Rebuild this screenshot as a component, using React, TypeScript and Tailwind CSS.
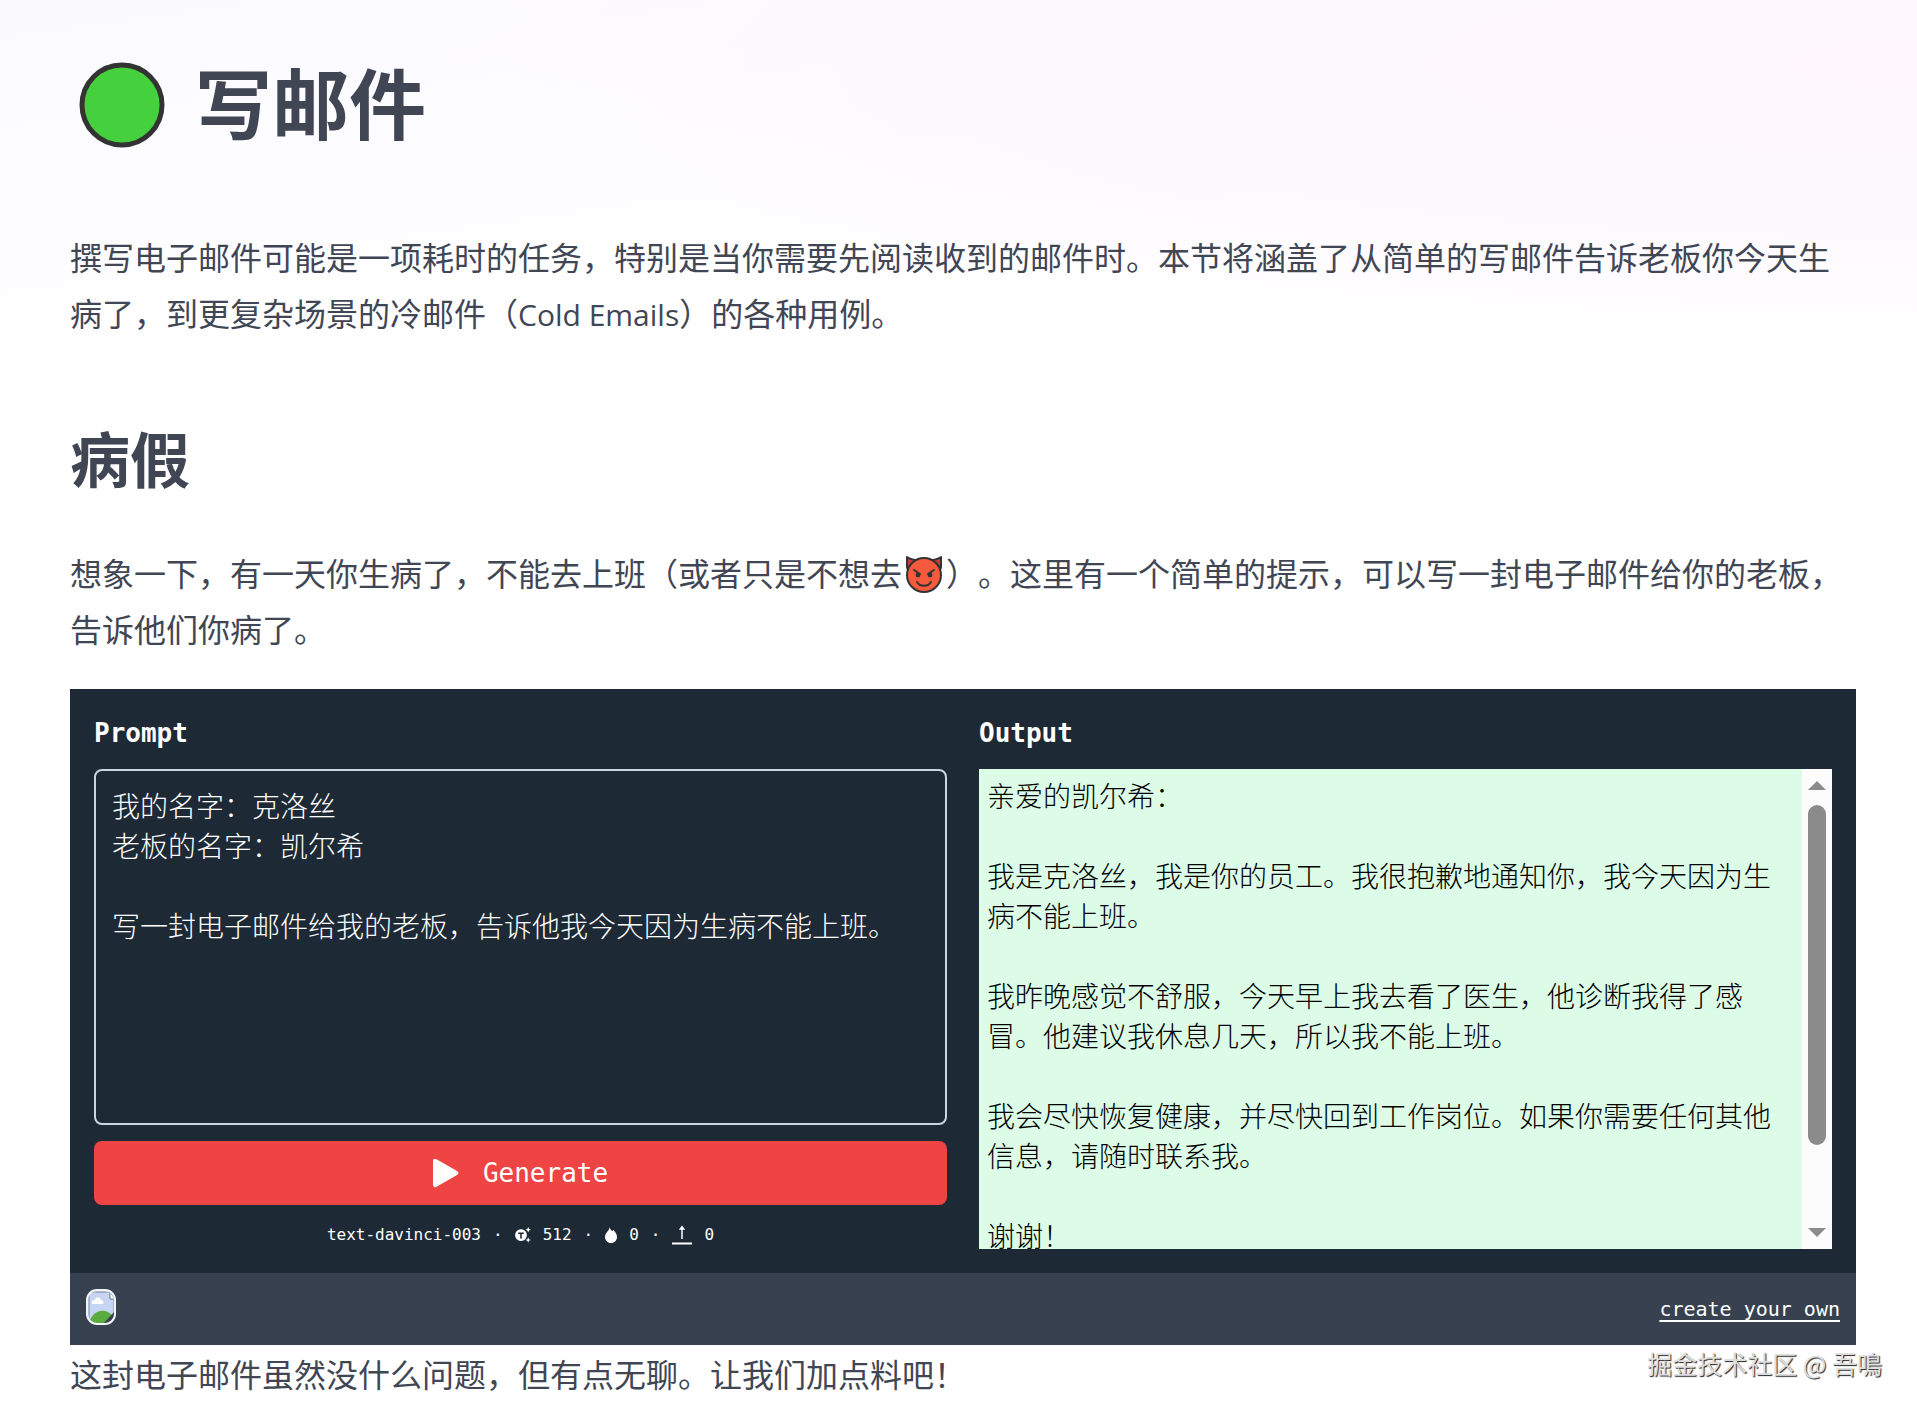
import { useState } from "react";

const PROMPT = `我的名字：克洛丝
老板的名字：凯尔希

写一封电子邮件给我的老板，告诉他我今天因为生病不能上班。`;

const OUTPUT = `亲爱的凯尔希：

我是克洛丝，我是你的员工。我很抱歉地通知你，我今天因为生病不能上班。

我昨晚感觉不舒服，今天早上我去看了医生，他诊断我得了感冒。他建议我休息几天，所以我不能上班。

我会尽快恢复健康，并尽快回到工作岗位。如果你需要任何其他信息，请随时联系我。

谢谢！`;

function GreenCircle() {
  return (
    <svg viewBox="0 0 86 86" className="size-[86px] shrink-0" aria-hidden="true">
      <circle cx="43" cy="43" r="40" fill="#45d03e" stroke="#333333" strokeWidth="5" />
    </svg>
  );
}

function DevilFace() {
  return (
    <svg viewBox="0 0 40 40" className="inline-block size-10 mx-0.5 mb-1.5 align-middle" aria-label="😈" role="img">
      <path d="M3 3v10c0 2 1 3 2 4L15 6C11 6 6 5 3 3ZM37 3v10c0 2-1 3-2 4L25 6c4 0 9-1 12-3Z" fill="#c93a38" stroke="#333" strokeWidth="2" strokeLinejoin="round" />
      <circle cx="20" cy="21" r="17" fill="#f55a3c" stroke="#333" strokeWidth="2" />
      <path d="M10 16l6 4M30 16l-6 4" stroke="#333" strokeWidth="2" strokeLinecap="round" />
      <circle cx="14" cy="21" r="2.4" fill="#333" />
      <circle cx="26" cy="21" r="2.4" fill="#333" />
      <path d="M13 28c3 5 11 5 14 0" fill="none" stroke="#333" strokeWidth="2" strokeLinecap="round" />
    </svg>
  );
}

function PlayIcon() {
  return (
    <svg viewBox="0 0 26 30" className="h-[30px] w-[26px]" fill="currentColor" aria-hidden="true">
      <path d="M0 3.2C0 .8 2 .2 4 1.4L24 13c2 1.2 2 2.800 0 4L4 28.600C2 29.800 0 29.200 0 26.800Z" />
    </svg>
  );
}

function TokenIcon() {
  return (
    <svg viewBox="0 0 16 16" className="size-4" fill="currentColor" aria-hidden="true">
      <path fillRule="evenodd" d="M6 2.200a5.900 5.900 0 1 0 .01 0ZM3.200 5.600h5.600v1.500H6.800v4.400H5.200V7.100h-2Z" />
      <path d="M13.200 0l.8 1.900 1.900.8-1.900.8-.8 1.900-.8-1.900-1.900-.8 1.900-.8ZM13.200 10.300l.8 1.900 1.900.8-1.900.8-.8 1.900-.8-1.900-1.900-.8 1.900-.8Z" />
    </svg>
  );
}

function DropIcon() {
  return (
    <svg viewBox="0 0 12 16" className="h-4 w-3" fill="currentColor" aria-hidden="true">
      <path d="M4.600 0c.4 2.200 1.600 3 2.700 4.300.5-.5.700-1 .8-1.600C10.500 5 12 7.300 12 10c0 3.400-2.600 6-6 6s-6-2.600-6-6c0-2.200 1.100-3.700 2.500-5.400C3.700 3.100 4.500 2 4.600 0Z" />
    </svg>
  );
}

function UploadIcon() {
  return (
    <svg viewBox="0 0 20 20" className="size-5" fill="none" stroke="currentColor" aria-hidden="true">
      <path d="M10 14V2" strokeWidth="1.500" />
      <path d="M10 .5l3.200 4.300H6.800Z" fill="currentColor" stroke="none" />
      <path d="M0 18.500h20" strokeWidth="2" />
    </svg>
  );
}

// Browser placeholder for the logo that failed to load
function BrokenImage() {
  return (
    <svg viewBox="0 0 30 36" className="mb-1 h-9 w-[30px]" role="img" aria-label="logo">
      <clipPath id="frame">
        <rect x="1" y="1" width="28" height="34" rx="10" />
      </clipPath>
      <g clipPath="url(#frame)">
        <path d="M0 0h30v36H0Z" fill="#dfe7f6" />
        <path d="M3 3h21v7h4v25H3Z" fill="#c5d5f3" stroke="#7d8aa0" />
        <path d="M24 3v7h5Z" fill="#fff" stroke="#7d8aa0" />
        <path d="M6 15c-1-3 1-4 3-4 0-3 5-4 6 0 3 0 3 3 2 4Z" fill="#fff" />
        <path d="M3 33c5-13 16-14 23-7l-7 8H3Z" fill="#5aac3e" />
        <path d="M29 22v13H17Z" fill="#374151" />
      </g>
      <rect x="1" y="1" width="28" height="34" rx="10" fill="none" stroke="#f3f5f8" strokeWidth="2" />
    </svg>
  );
}

function Scrollbar() {
  return (
    <div className="flex w-[30px] shrink-0 flex-col items-center bg-[#fcfcfc] py-3 text-[#8b8b8b]" aria-hidden="true">
      <svg viewBox="0 0 18 9" className="h-[9px] w-[18px]" fill="currentColor">
        <path d="M9 0l9 9H0Z" />
      </svg>
      <div className="mt-[15px] h-[340px] w-[18px] rounded-full bg-[#8b8b8b]" />
      <svg viewBox="0 0 18 9" className="mt-auto h-[9px] w-[18px]" fill="currentColor">
        <path d="M0 0h18L9 9Z" />
      </svg>
    </div>
  );
}

function PromptEmbed() {
  const [prompt, setPrompt] = useState(PROMPT);
  return (
    <div className="bg-[#1e2936] font-['DejaVu_Sans_Mono','Noto_Sans_CJK_SC',monospace] text-white">
      <div className="grid grid-cols-2 gap-8 p-6">
        <div className="flex flex-col">
          <label htmlFor="prompt" className="mb-4 text-[26px] leading-10 font-bold">Prompt</label>
          <textarea
            id="prompt"
            value={prompt}
            onChange={(e) => setPrompt(e.target.value)}
            className="h-[356px] w-full resize-none rounded-lg border-2 border-slate-300 bg-transparent px-4 py-3.5 font-['Noto_Sans_CJK_SC',sans-serif] text-[28px] leading-10 font-light outline-none [text-spacing-trim:space-all]"
          />
          <button type="button" className="mt-4 flex h-16 items-center justify-center gap-6 rounded-lg bg-[#ef4444] text-[26px]">
            <PlayIcon />
            Generate
          </button>
          <div className="mt-[18px] flex h-6 items-center justify-center gap-3 text-base">
            <span>text-davinci-003</span>
            <span>·</span>
            <TokenIcon />
            <span>512</span>
            <span>·</span>
            <DropIcon />
            <span>0</span>
            <span>·</span>
            <UploadIcon />
            <span>0</span>
          </div>
        </div>
        <div className="flex flex-col">
          <h3 className="mb-4 text-[26px] leading-10 font-bold">Output</h3>
          <div className="flex h-[480px] overflow-hidden bg-[#dcfce7]">
            <div className="flex-1 px-2 py-1.5 font-['Noto_Sans_CJK_SC',sans-serif] text-[28px] leading-10 font-light whitespace-pre-wrap text-black [text-spacing-trim:space-all]">
              {OUTPUT}
            </div>
            <Scrollbar />
          </div>
        </div>
      </div>
      <div className="flex h-[72px] items-center justify-between bg-[#374150] px-4">
        <BrokenImage />
        <a href="#create" className="text-xl underline decoration-2 underline-offset-4">create your own</a>
      </div>
    </div>
  );
}

export default function App() {
  return (
    <div className="relative min-h-screen bg-white bg-[radial-gradient(ellipse_at_100%_15%,#fff7fc_0%,#fdf9fe_30%,transparent_60%),linear-gradient(172deg,#fbfaff_0%,#fdfdff_14%,#ffffff_26%)] bg-[length:100%_420px,100%_100%] bg-no-repeat font-['Open_Sans','Noto_Sans_CJK_SC',sans-serif] text-[#414654] [text-spacing-trim:space-all]">
      <main className="pt-[51px] pr-[61px] pl-[70px] text-[32px] leading-[56px]">
        <h1 className="flex h-[107px] items-center gap-[30px] pl-[9px] text-[77px] leading-[106px] font-bold">
          <GreenCircle />
          写邮件
        </h1>
        <p className="mt-[72px]">
          撰写电子邮件可能是一项耗时的任务，特别是当你需要先阅读收到的邮件时。本节将涵盖了从简单的写邮件告诉老板你今天生病了，到更复杂场景的冷邮件（<span className="text-[30px]">Cold Emails</span>）的各种用例。
        </p>
        <h2 className="mt-[77px] text-[60px] leading-[80px] font-bold">病假</h2>
        <p className="mt-[46px] mb-[31px]">
          想象一下，有一天你生病了，不能去上班（或者只是不想去
          <DevilFace />
          ）。这里有一个简单的提示，可以写一封电子邮件给你的老板，告诉他们你病了。
        </p>
        <PromptEmbed />
        <p className="mt-0.5">这封电子邮件虽然没什么问题，但有点无聊。让我们加点料吧！</p>
      </main>
      <span className="absolute right-[35px] bottom-8 font-['Noto_Sans_CJK_SC',sans-serif] text-[25px] leading-9 text-[#dedede] [text-shadow:1px_1px_1px_#222]">
        掘金技术社区 @ 吾鳴
      </span>
    </div>
  );
}
